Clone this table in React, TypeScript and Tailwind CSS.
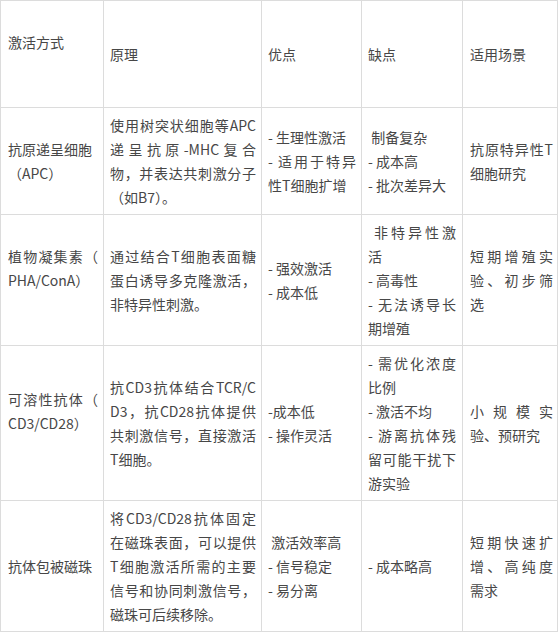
type Line = string | { j: string };

const J = (j: string): Line => ({ j });
const sp = "\u00a0";

const rows: Line[][][] = [
  [["激活方式", sp], ["原理"], ["优点"], ["缺点"], ["适用场景"]],
  [
    ["抗原递呈细胞", "（APC）"],
    [J("使用树突状细胞等APC"), J("递呈抗原-MHC复合"), J("物，并表达共刺激分子"), "（如B7）。"],
    ["- 生理性激活", J("- 适用于特异"), "性T细胞扩增"],
    [sp + "制备复杂", "- 成本高", "- 批次差异大"],
    [J("抗原特异性T"), "细胞研究"],
  ],
  [
    [J("植物凝集素（"), "PHA/ConA）", sp],
    [J("通过结合T细胞表面糖"), J("蛋白诱导多克隆激活，"), "非特异性刺激。"],
    ["- 强效激活", "- 成本低"],
    [J(sp + "非特异性激"), "活", "- 高毒性", J("- 无法诱导长"), "期增殖"],
    [J("短期增殖实"), J("验、初步筛"), "选"],
  ],
  [
    [J("可溶性抗体（"), "CD3/CD28）", sp],
    [J("抗CD3抗体结合TCR/C"), J("D3，抗CD28抗体提供"), J("共刺激信号，直接激活"), "T细胞。"],
    ["-成本低", "- 操作灵活"],
    [J("- 需优化浓度"), "比例", "- 激活不均", J("- 游离抗体残"), J("留可能干扰下"), "游实验"],
    [J("小规模实"), "验、预研究"],
  ],
  [
    ["抗体包被磁珠"],
    [J("将CD3/CD28抗体固定"), J("在磁珠表面，可以提供"), J("T细胞激活所需的主要"), J("信号和协同刺激信号，"), "磁珠可后续移除。"],
    [sp + "激活效率高", "- 信号稳定", "- 易分离"],
    ["- 成本略高"],
    [J("短期快速扩"), J("增、高纯度"), "需求"],
  ],
];

// padding per column, measured from the reference
const pad = [
  "pl-[7px] pr-[5px]",
  "pl-[6px] pr-[5px]",
  "pl-[6px] pr-[5px]",
  "pl-[6px] pr-[6px]",
  "pl-[7px] pr-[4px]",
];

function Cell({ lines, col }: { lines: Line[]; col: number }) {
  return (
    <div className={`flex flex-col justify-center bg-white ${pad[col]}`}>
      {lines.map((l, i) =>
        typeof l === "string" ? (
          <div key={i} className="whitespace-nowrap">
            {l}
          </div>
        ) : (
          <div key={i} className="whitespace-nowrap text-justify [text-align-last:justify]">
            {l.j}
          </div>
        )
      )}
    </div>
  );
}

export default function App() {
  return (
    <div className="min-h-[634px] w-[559px] bg-white">
      <div
        className="grid w-fit grid-cols-[102px_157px_99px_100px_94px] grid-rows-[106px_106px_130px_154px_130px] gap-px border border-[#dcdcdc] bg-[#dcdcdc] text-[14px] leading-6 text-[#474747]"
        style={{ fontFamily: '"Noto Sans CJK SC", "Noto Sans", sans-serif' }}
      >
        {rows.map((cells, r) =>
          cells.map((lines, c) => <Cell key={`${r}-${c}`} lines={lines} col={c} />)
        )}
      </div>
    </div>
  );
}
